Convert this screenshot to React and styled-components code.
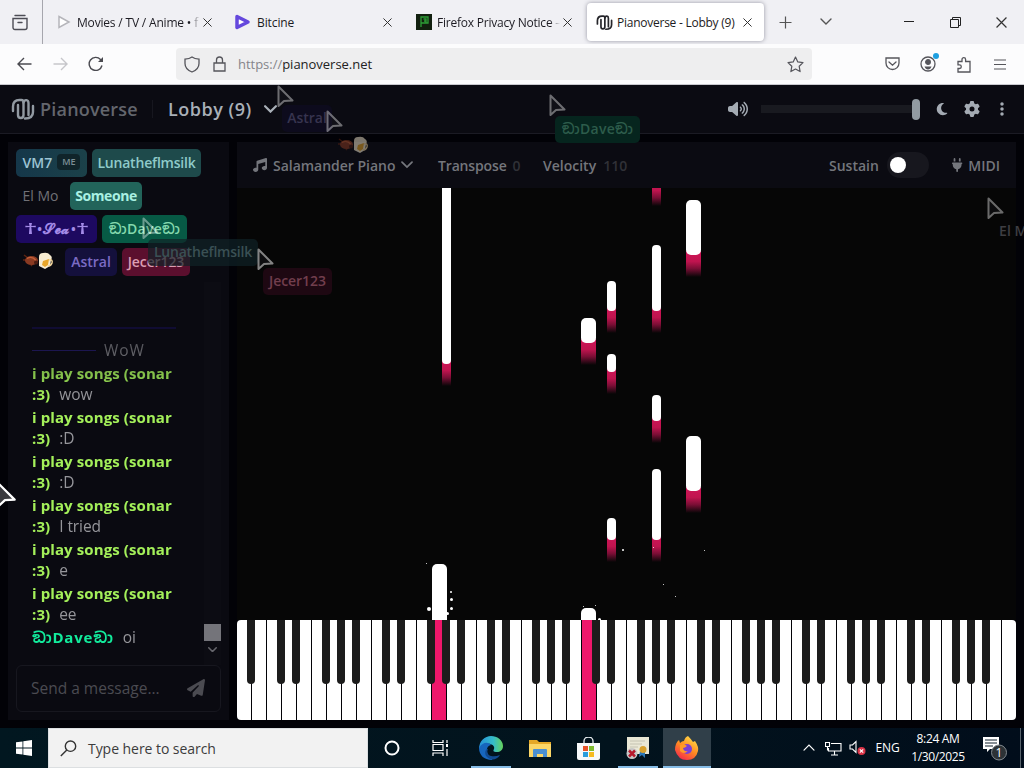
import styled, { createGlobalStyle } from "styled-components";
import {
  FaVolumeHigh,
  FaMoon,
  FaGear,
  FaEllipsisVertical,
  FaMusic,
  FaPlug,
  FaPaperPlane,
} from "react-icons/fa6";

const GlobalStyle = createGlobalStyle`
  * {
    box-sizing: border-box;
  }
  body {
    margin: 0;
    overflow: hidden;
    background: #020207;
  }
`;

const Screen = styled.div`
  position: relative;
  display: flex;
  flex-direction: column;
  width: 1024px;
  height: 768px;
  overflow: hidden;
  background: #020207;
  font-family: "Open Sans", "Noto Sans", "Noto Sans Sinhala", "DejaVu Sans", sans-serif;
  white-space: nowrap;
`;

/* ---------- browser ---------- */

const TabStrip = styled.div`
  display: flex;
  align-items: center;
  height: 44px;
  background: #f0f0f4;
`;

const ViewButton = styled.div`
  display: flex;
  align-items: center;
  justify-content: center;
  width: 43px;
  height: 44px;
  padding-right: 3px;
  border-right: 1px solid #a6a6ad;
`;

const Tab = styled.div`
  display: flex;
  align-items: center;
  width: ${(p) => p.$width}px;
  height: 38px;
  padding: 0 ${(p) => p.$right || 11}px 0 ${(p) => p.$left || 12}px;
  border-radius: 4px;
  background: ${(p) => (p.$active ? "#fff" : "transparent")};
  box-shadow: ${(p) => (p.$active ? "0 0 4px rgba(90, 90, 110, 0.6)" : "none")};
`;

const TabTitle = styled.div`
  flex: 1;
  overflow: hidden;
  margin: 0 3px 0 ${(p) => p.$gap || 5}px;
  font-size: 12px;
  letter-spacing: ${(p) => p.$spacing || 0}px;
  color: #1c1b22;
  mask-image: ${(p) =>
    p.$fade ? "linear-gradient(90deg, #000 92%, transparent)" : "none"};
`;

const StripButton = styled.div`
  display: flex;
  align-items: center;
  justify-content: center;
  width: ${(p) => p.$width}px;
`;

const Spacer = styled.div`
  flex: 1;
`;

const NavBar = styled.div`
  display: flex;
  align-items: center;
  height: 41px;
  padding-left: 6px;
  background: #fcfcfd;
  border-bottom: 1px solid #c9c9cf;
`;

const NavButton = styled.div`
  display: flex;
  align-items: center;
  justify-content: center;
  width: 36px;
  height: 32px;
  position: relative;
`;

const UrlBar = styled.div`
  display: flex;
  align-items: center;
  width: 636px;
  height: 32px;
  margin-left: 62px;
  padding: 0 8px;
  border-radius: 4px;
  background: #eeeeef;
`;

const UrlText = styled.div`
  flex: 1;
  margin-left: 10px;
  font-size: 13px;
  letter-spacing: -0.02px;
  color: #222;
  span {
    color: #85858a;
  }
`;

const Dot = styled.i`
  position: absolute;
  top: 5px;
  right: 7px;
  width: 6px;
  height: 6px;
  border-radius: 50%;
  background: #1e9fe0;
`;

/* ---------- site ---------- */

const SiteHeader = styled.div`
  display: flex;
  align-items: center;
  height: 49px;
  padding: 0 7px 0 11px;
  background: #0b0b12;
  border-bottom: 1px solid #1b1b24;
`;

const Brand = styled.div`
  display: flex;
  align-items: center;
  width: 142px;
  height: 18px;
  gap: 5px;
  border-right: 1px solid #17171f;
  color: #63666d;
  font-size: 18px;
  font-weight: 600;
  letter-spacing: 0.2px;
`;

const Room = styled.div`
  display: flex;
  align-items: center;
  gap: 12px;
  margin-left: 15px;
  font-size: 18px;
  font-weight: 600;
  letter-spacing: 0.5px;
  color: #a9b0b8;
`;

const HeaderIcon = styled.div`
  display: flex;
  align-items: center;
  justify-content: center;
  width: 30px;
  color: #a4abb3;
`;

const VolumeTrack = styled.div`
  display: flex;
  justify-content: flex-end;
  align-items: center;
  width: 159px;
  height: 8px;
  margin: 0 7px 0 12px;
  background: #191a20;
`;

const VolumeThumb = styled.div`
  width: 8px;
  height: 21px;
  border-radius: 4px;
  background: #929ba2;
`;

const SiteBody = styled.div`
  display: flex;
  gap: 8px;
  height: 594px;
  padding: 8px;
`;

const Sidebar = styled.div`
  display: flex;
  flex-direction: column;
  width: 221px;
  height: 578px;
  padding: 7px 8px 8px;
  background: #0a0a11;
`;

const Chips = styled.div`
  display: flex;
  flex-wrap: wrap;
  gap: 5px;
  padding-right: 8px;
`;

const Chip = styled.div`
  display: flex;
  align-items: center;
  justify-content: center;
  width: ${(p) => p.$width}px;
  height: 28px;
  padding-bottom: 2px;
  gap: 5px;
  border-radius: 5px;
  background: ${(p) => p.$bg || "transparent"};
  color: ${(p) => p.$color};
  font-size: 14px;
  font-weight: ${(p) => p.$weight || 600};
  letter-spacing: ${(p) => p.$spacing || 0}px;
`;

const MeBadge = styled.span`
  padding: 1px 5px;
  border-radius: 4px;
  background: #10242a;
  color: #7c8f96;
  font-size: 9px;
  line-height: 14px;
`;

const WideGlyph = styled.span`
  display: inline-block;
  margin: 0 2px;
  transform: scaleX(1.9);
`;

const ScriptName = styled.span`
  font-size: 14px;
  letter-spacing: 0.5px;
`;

const NameRow = styled.span`
  display: flex;
  align-items: center;
  gap: 1px;
`;

const ChatArea = styled.div`
  display: flex;
  flex: 1;
  min-height: 0;
  margin-top: 6px;
`;

const ChatLog = styled.div`
  display: flex;
  flex-direction: column;
  justify-content: flex-end;
  width: 188px;
  padding: 0 16px 17px;
  font-size: 15.5px;
  line-height: 21px;
  mask-image: linear-gradient(180deg, transparent 2%, #000 30%);
`;

const Message = styled.div`
  margin-top: 2px;
  color: #96969b;
  font-weight: 400;
  letter-spacing: -0.1px;
  white-space: normal;
`;

const Author = styled.b`
  margin-right: 9px;
  color: ${(p) => p.$color};
  font-size: 15px;
  font-weight: 700;
  letter-spacing: ${(p) => p.$spacing || 0}px;
`;

const Divider = styled.div`
  height: 2px;
  width: 144px;
  margin-bottom: 11px;
  background: #1d1270;
`;

const WelcomeLine = styled.div`
  display: flex;
  align-items: center;
  gap: 8px;
  color: #9c9ca1;
  letter-spacing: 0.9px;
  &::before {
    content: "";
    width: 64px;
    height: 1px;
    background: #2b1f80;
  }
`;

const Scrollbar = styled.div`
  display: flex;
  flex-direction: column;
  align-items: center;
  justify-content: flex-end;
  gap: 6px;
  width: 17px;
  padding-bottom: 13px;
  background: #0c0c13;
`;

const ScrollThumb = styled.div`
  width: 17px;
  height: 17px;
  background: #74747a;
`;

const MessageBox = styled.div`
  display: flex;
  align-items: center;
  justify-content: space-between;
  height: 47px;
  padding: 0 15px 1px 14px;
  border: 1px solid #17171f;
  border-radius: 6px;
  color: #4b4b51;
  font-size: 15.5px;
`;

const Main = styled.div`
  display: flex;
  flex-direction: column;
  width: 780px;
  height: 578px;
`;

const PianoBar = styled.div`
  display: flex;
  align-items: center;
  height: 46px;
  padding: 0 16px;
  background: #0b0b12;
  color: #74767c;
  font-size: 14px;
  font-weight: 600;
`;

const BarItem = styled.div`
  display: flex;
  align-items: center;
  width: ${(p) => p.$width}px;
  gap: ${(p) => p.$gap || 6}px;
  letter-spacing: ${(p) => p.$spacing || 0}px;
  em {
    font-style: normal;
    color: #303137;
  }
`;

const Toggle = styled.div`
  width: 42px;
  height: 26px;
  padding: 5px 3px;
  border-radius: 13px;
  background: #17171e;
  &::before {
    content: "";
    display: block;
    width: 16px;
    height: 16px;
    border-radius: 50%;
    background: #fff;
  }
`;

const NoteCanvas = styled.div`
  position: relative;
  height: 432px;
  overflow: hidden;
  background: #060606;
`;

const Note = styled.div`
  position: absolute;
  left: ${(p) => p.$x}px;
  top: ${(p) => p.$y}px;
  width: ${(p) => p.$w}px;
  height: ${(p) => p.$h}px;
  z-index: 1;
  border-radius: ${(p) => (p.$w > 10 ? 5 : 4)}px;
  background: #fff;
`;

const Trail = styled.div`
  position: absolute;
  left: ${(p) => p.$x}px;
  top: ${(p) => p.$y}px;
  width: ${(p) => p.$w}px;
  height: 26px;
  background: linear-gradient(180deg, #d01558, #c0144f 40%, #7a0e35 68%, rgba(60, 8, 25, 0));
`;

const Spark = styled.i`
  position: absolute;
  left: ${(p) => p.$x}px;
  top: ${(p) => p.$y}px;
  width: ${(p) => p.$s}px;
  height: ${(p) => p.$s}px;
  border-radius: 50%;
  background: #fff;
`;

const Keyboard = styled.div`
  display: flex;
  gap: 1px;
  height: 100px;
  border-radius: 4px;
`;

const WhiteKey = styled.div`
  position: relative;
  width: 14px;
  height: 100px;
  background: ${(p) => (p.$on ? "#ee176b" : "#fff")};
  &:first-child {
    border-radius: 4px 0 0 4px;
  }
  &:last-child {
    border-radius: 0 4px 4px 0;
  }
`;

const BlackKey = styled.div`
  position: absolute;
  z-index: 1;
  left: 10px;
  top: 0;
  width: 8px;
  height: 64px;
  border-radius: 0 0 4px 4px;
  background: #1c1c1c;
`;

/* ---------- remote cursors ---------- */

const Pointer = styled.div`
  position: absolute;
  z-index: 5;
  left: ${(p) => p.$x}px;
  top: ${(p) => p.$y}px;
  opacity: ${(p) => p.$opacity || 0.4};
  line-height: 0;
`;

const PointerLabel = styled.div`
  position: absolute;
  z-index: 4;
  left: ${(p) => p.$x}px;
  top: ${(p) => p.$y}px;
  width: ${(p) => p.$w}px;
  height: 27px;
  border-radius: 5px;
  background: ${(p) => p.$bg || "transparent"};
  color: ${(p) => p.$color};
  font-size: 14px;
  font-weight: 600;
  line-height: 26px;
  text-align: center;
  letter-spacing: ${(p) => p.$spacing || 0}px;
  opacity: ${(p) => p.$opacity || 1};
`;

/* ---------- taskbar ---------- */

const Taskbar = styled.div`
  display: flex;
  align-items: stretch;
  height: 40px;
  background: linear-gradient(90deg, #011720, #02131d 60%, #010d1b);
  color: #fff;
`;

const TaskCell = styled.div`
  display: flex;
  align-items: center;
  justify-content: center;
  width: ${(p) => p.$width || 49}px;
  background: ${(p) => (p.$active ? "#303f49" : "transparent")};
`;

const OpenCell = styled(TaskCell)`
  width: ${(p) => (p.$active ? 48 : 40)}px;
  margin: ${(p) => p.$margin || 0};
  border-bottom: 2px solid #86bce6;
  padding-top: 2px;
`;

const TaskSearch = styled.div`
  display: flex;
  align-items: center;
  gap: 11px;
  width: 320px;
  padding-left: 11px;
  border: 1px solid #dcdfe1;
  background: #f2f2f2;
  color: #3c3c3c;
  font-size: 14px;
  letter-spacing: -0.05px;
`;

const TrayText = styled.div`
  display: flex;
  flex-direction: column;
  justify-content: center;
  width: ${(p) => p.$width}px;
  padding-bottom: 1px;
  text-align: center;
  font-size: 12px;
  line-height: 18px;
  letter-spacing: ${(p) => p.$spacing || 0}px;
`;

const ShowDesktop = styled.div`
  width: 4px;
  border-left: 1px solid #58636c;
`;

const Close = ({ size = 9, color = "#333" }) => (
  <svg width={size} height={size} viewBox="0 0 10 10" stroke={color} strokeWidth="1.1">
    <path d="M.5 .5l9 9M9.5 .5l-9 9" />
  </svg>
);

const Chevron = ({ w = 12, color = "#555", stroke = 1.4, up }) => (
  <svg width={w} height={w * 0.6} viewBox="0 0 12 7" fill="none" stroke={color} strokeWidth={stroke} strokeLinecap="round">
    <path d={up ? "M1 6l5-5 5 5" : "M1 1l5 5 5-5"} />
  </svg>
);

const Logo = ({ size = 24, color = "#929aa2" }) => (
  <svg width={size} height={size} viewBox="0 0 24 24" fill="none" stroke={color} strokeWidth="2.4" strokeLinecap="round">
    <path d="M2 14V9.500C2 5.500 4.500 3 8.500 3h2c1.500 0 2 1 2 2.500V18c0 4-5.500 4-5.500 0V8" />
    <path d="M12.500 5.500c1-3.500 5-3 5 .5V18M14 21.500c5 0 8-2.500 8-6.500V9" />
  </svg>
);

const Arrow = ({ size = 22, fill = "rgba(40,40,45,.5)" }) => (
  <svg width={size} height={size} viewBox="0 0 22 22" fill={fill} stroke="#fff" strokeWidth="2" strokeLinejoin="round">
    <path d="M1.500 1.500l14 14-8.500 .5-5.500 5z" />
  </svg>
);

const Emojis = () => (
  <svg width="32" height="18" viewBox="0 0 32 18">
    <path d="M2 3l4 3M1 8l4 0M9 14l2-3" stroke="#5d2413" strokeWidth="1.5" />
    <ellipse cx="9.5" cy="8.5" rx="6.500" ry="4.500" fill="#8a3a22" />
    <path d="M5 6.500q5-3 9 2" stroke="#c4603b" strokeWidth="1.4" fill="none" />
    <circle cx="14" cy="10.500" r="2" fill="#4a1c12" />
    <path d="M17 5q0-4 4-4 5-1 7 2 3 2 1 5l-1 6-5 3-6-3z" fill="#f8ecd2" />
    <path d="M21 9l6-2-1 6-3 2-3-2z" fill="#e9a62a" />
    <path d="M27 8q4-1 3 3-1 3-4 3" fill="none" stroke="#f1d59c" strokeWidth="1.5" />
  </svg>
);

const BLACK_AFTER = [0, 2, 3, 5, 6];
const KEYS = Array.from({ length: 52 }, (_, i) => i);

const NOTES = [
  [205, -10, 9, 186],
  [415, -40, 9, 36],
  [449, 12, 15, 55],
  [415, 57, 9, 66],
  [370, 93, 9, 30],
  [344, 130, 15, 25],
  [370, 166, 9, 18],
  [415, 207, 9, 26],
  [449, 248, 15, 55],
  [415, 281, 9, 71],
  [370, 330, 9, 22],
  [195, 376, 15, 80],
  [344, 420, 15, 40],
];

const SPARKS = [
  [189, 375, 1], [190, 419, 4], [213, 403, 2], [213, 410, 3], [213, 419, 3],
  [209, 424, 3], [385, 361, 2], [416, 359, 1], [426, 396, 1], [438, 408, 1],
  [467, 362, 1], [346, 418, 1], [358, 417, 1], [361, 430, 3],
];

const CHAT = ["wow", ":D", ":D", "I tried", "e", "ee"];

const Browser = () => (
  <>
    <TabStrip>
      <ViewButton>
        <svg width="16" height="17" viewBox="0 0 16 17" fill="none" stroke="#4c4c55" strokeWidth="1.4">
          <path d="M3 1.500h10M1 4.500h14v9a2 2 0 0 1-2 2H3a2 2 0 0 1-2-2zM6 8.500h4" strokeLinecap="round" />
        </svg>
      </ViewButton>
      <Tab $width={180} $left={14}>
        <svg width="14" height="14" viewBox="0 0 14 14" fill="#fff" stroke="#b5b5ba" strokeWidth="1.5">
          <path d="M2 1.500l10 5.500-10 5.500z" />
        </svg>
        <TabTitle $gap={6} $spacing={-0.18} $fade>Movies / TV / Anime • f</TabTitle>
        <Close />
      </Tab>
      <Tab $width={180} $left={12}>
        <svg width="16" height="16" viewBox="0 0 16 16">
          <path d="M2 2.500l11 5.500-11 5.500z" fill="#fff" stroke="#6548dd" strokeWidth="3.5" strokeLinejoin="round" />
        </svg>
        <TabTitle $gap={6} $spacing={-0.1}>Bitcine</TabTitle>
        <Close />
      </Tab>
      <Tab $width={184} $left={13} $right={15}>
        <svg width="16" height="16" viewBox="0 0 16 16" fill="none" stroke="#2d9e36" strokeWidth="1.3">
          <rect width="16" height="16" fill="#12200f" stroke="none" />
          <path d="M5 13V3h7v6H5M7.500 5H10v2H8M10 7v2" />
        </svg>
        <TabTitle $spacing={-0.22} $fade>Firefox Privacy Notice –</TabTitle>
        <Close />
      </Tab>
      <Tab $width={177} $left={9} $right={12} $active>
        <Logo size={17} color="#26262b" />
        <TabTitle $gap={4} $spacing={-0.25}>Pianoverse - Lobby (9)</TabTitle>
        <Close />
      </Tab>
      <StripButton $width={42}>
        <svg width="13" height="13" stroke="#555" strokeWidth="1.2">
          <path d="M6.500 .5v12M.5 6.500h12" />
        </svg>
      </StripButton>
      <StripButton $width={40}>
        <Chevron w={12} />
      </StripButton>
      <Spacer />
      <StripButton $width={46}>
        <svg width="10" height="2">
          <rect width="10" height="1" fill="#222" />
        </svg>
      </StripButton>
      <StripButton $width={46}>
        <svg width="11" height="11" fill="none" stroke="#222">
          <path d="M.5 2.500h8v8h-8zM2.500 2.500v-2h8v8h-2" />
        </svg>
      </StripButton>
      <StripButton $width={46}>
        <Close size={11} />
      </StripButton>
    </TabStrip>
    <NavBar>
      <NavButton>
        <svg width="15" height="14" viewBox="0 0 15 14" fill="none" stroke="#4a4a50" strokeWidth="1.4">
          <path d="M14.500 7H1.500M7 1L1 7l6 6" />
        </svg>
      </NavButton>
      <NavButton>
        <svg width="15" height="14" viewBox="0 0 15 14" fill="none" stroke="#c6c6ca" strokeWidth="1.4">
          <path d="M.5 7h13M8 1l6 6-6 6" />
        </svg>
      </NavButton>
      <NavButton>
        <svg width="16" height="16" viewBox="0 0 16 16" fill="none" stroke="#4a4a50" strokeWidth="1.4">
          <path d="M14 9.500A6.500 6.500 0 1 1 12.500 3.500L14.500 5.500" />
          <path d="M15 1v5h-5z" fill="#4a4a50" stroke="none" />
        </svg>
      </NavButton>
      <UrlBar>
        <svg width="16" height="17" viewBox="0 0 16 17" fill="none" stroke="#55555b" strokeWidth="1.3">
          <path d="M8 1c2 1.500 4 2 7 2.200v4.300c0 4-3 7-7 8.500-4-1.500-7-4.500-7-8.500V3.200C4 3 6 2.500 8 1z" />
        </svg>
        <svg width="28" height="16" viewBox="-14 0 28 16" fill="none" stroke="#55555b" strokeWidth="1.3">
          <path d="M0 7h11v8H0zM2.500 7V4a3 3 0 0 1 6 0v3" />
        </svg>
        <UrlText><span>https://</span>pianoverse.net</UrlText>
        <svg width="17" height="17" viewBox="0 0 17 17" fill="none" stroke="#55555b" strokeWidth="1.2" strokeLinejoin="round">
          <path d="M8.500 1l2.300 4.900 5.200.7-3.800 3.700.9 5.300-4.600-2.600-4.600 2.600.9-5.300L1 6.600l5.200-.7z" />
        </svg>
      </UrlBar>
      <Spacer />
      <NavButton>
        <svg width="15" height="14" viewBox="0 0 15 14" fill="none" stroke="#55555b" strokeWidth="1.3" strokeLinecap="round">
          <path d="M1 1h13v5a6.500 6.500 0 0 1-13 0zM4 5l3.500 3.200L11 5" />
        </svg>
      </NavButton>
      <NavButton>
        <svg width="16" height="16" viewBox="0 0 16 16" fill="none" stroke="#55555b" strokeWidth="1.3">
          <circle cx="8" cy="8" r="7" />
          <circle cx="8" cy="6" r="2.3" fill="#55555b" />
          <path d="M4.500 10.500h7q-1 3-3.500 3t-3.500-3z" fill="#55555b" stroke="none" />
        </svg>
        <Dot />
      </NavButton>
      <NavButton>
        <svg width="16" height="17" viewBox="0 0 16 17" fill="none" stroke="#55555b" strokeWidth="1.3">
          <path d="M2 16V12.500h1.500a1.800 1.800 0 0 0 0-3.600H2V5.500h4V3.500a1.800 1.800 0 0 1 3.600 0v2H14V16z" />
        </svg>
      </NavButton>
      <NavButton>
        <svg width="12" height="11" stroke="#55555b" strokeWidth="1.2">
          <path d="M0 1h12M0 5.500h12M0 10h12" />
        </svg>
      </NavButton>
      <StripButton $width={6} />
    </NavBar>
  </>
);

const Piano = () => (
  <Main>
    <PianoBar>
      <BarItem $width={185} $spacing={-0.02}>
        <FaMusic size={14} />
        Salamander Piano
        <Chevron w={12} color="#75777d" stroke={1.8} />
      </BarItem>
      <BarItem $width={105} $gap={6} $spacing={-0.15}>
        Transpose <em>0</em>
      </BarItem>
      <BarItem $width={100} $gap={7}>
        Velocity <em>110</em>
      </BarItem>
      <Spacer />
      <BarItem $gap={8} $width={122}>
        Sustain
        <Toggle />
      </BarItem>
      <BarItem $width={49} $gap={5}>
        <FaPlug size={14} />
        MIDI
      </BarItem>
    </PianoBar>
    <NoteCanvas>
      {NOTES.map(([x, y, w, h]) => (
        <Trail key={"t" + x + y} $x={x} $y={y + h - 4} $w={w} />
      ))}
      {NOTES.map(([x, y, w, h]) => (
        <Note key={"n" + x + y} $x={x} $y={y} $w={w} $h={h} />
      ))}
      {SPARKS.map(([x, y, s]) => (
        <Spark key={"s" + x + y} $x={x} $y={y} $s={s} />
      ))}
    </NoteCanvas>
    <Keyboard>
      {KEYS.map((i) => (
        <WhiteKey key={i} $on={i === 13 || i === 23}>
          {BLACK_AFTER.includes(i % 7) && i < 51 && <BlackKey />}
        </WhiteKey>
      ))}
    </Keyboard>
  </Main>
);

const Chat = () => (
  <Sidebar>
    <Chips>
      <Chip $width={71} $bg="linear-gradient(90deg, #15374a, #1b4149)" $color="#9cc3d4">
        VM7 <MeBadge>ME</MeBadge>
      </Chip>
      <Chip $width={109} $bg="#1e4a4b" $color="#8fcac9" $spacing={-0.2}>Lunatheflmsilk</Chip>
      <Chip $width={49} $color="#717176" $weight={500}>El Mo</Chip>
      <Chip $width={72} $bg="#22645a" $color="#a9f0e2" $weight={700} $spacing={-0.4}>Someone</Chip>
      <Chip $width={81} $bg="#1d0960" $color="#a48be8">
        <NameRow>
          <WideGlyph>†</WideGlyph>•<ScriptName>𝓢𝓮𝓪</ScriptName>•<WideGlyph>†</WideGlyph>
        </NameRow>
      </Chip>
      <Chip $width={85} $bg="#075a45" $color="#84d8ad" $spacing={0.3}>ඞාDaveඞා</Chip>
      <Chip $width={44}><Emojis /></Chip>
      <Chip $width={52} $bg="#14103c" $color="#7b6bc4">Astral</Chip>
      <Chip $width={68} $bg="#5b0f2e" $color="#dc9db2" $spacing={-0.1}>Jecer123</Chip>
    </Chips>
    <ChatArea>
      <ChatLog>
        <Divider />
        <WelcomeLine>WoW</WelcomeLine>
        {CHAT.map((text, i) => (
          <Message key={i}>
            <Author $color="#a4f05a" $spacing={0.1}>i play songs (sonar :3)</Author>
            {text}
          </Message>
        ))}
        <Message>
          <Author $color="#12eb9c" $spacing={0.8}>ඞාDaveඞා</Author>
          oi
        </Message>
      </ChatLog>
      <Scrollbar>
        <ScrollThumb />
        <Chevron w={9} color="#66666c" stroke={2} />
      </Scrollbar>
    </ChatArea>
    <MessageBox>
      Send a message...
      <FaPaperPlane size={18} />
    </MessageBox>
  </Sidebar>
);

const Pointers = () => (
  <>
    <Pointer $x={277} $y={85}><Arrow /></Pointer>
    <Pointer $x={326} $y={110}><Arrow /></Pointer>
    <Pointer $x={549} $y={94}><Arrow /></Pointer>
    <Pointer $x={142} $y={217}><Arrow /></Pointer>
    <Pointer $x={257} $y={248} $opacity={0.5}><Arrow /></Pointer>
    <Pointer $x={987} $y={197}><Arrow /></Pointer>
    <Pointer $x={-3} $y={482} $opacity={1}><Arrow size={25} fill="#3a3a3e" /></Pointer>
    <PointerLabel $x={282} $y={105} $w={50} $bg="#0d0b1d" $color="#37344f">Astral</PointerLabel>
    <PointerLabel $x={337} $y={136} $w={32} $opacity={0.5}><Emojis /></PointerLabel>
    <PointerLabel $x={555} $y={116} $w={85} $bg="#06251e" $color="#2d5c4b" $spacing={0.3}>ඞාDaveඞා</PointerLabel>
    <PointerLabel $x={148} $y={239} $w={110} $bg="rgba(15, 34, 39, 0.7)" $color="#3a5054" $spacing={-0.2}>Lunatheflmsilk</PointerLabel>
    <PointerLabel $x={263} $y={268} $w={69} $bg="#1e0812" $color="#713e4d" $spacing={-0.05}>Jecer123</PointerLabel>
    <PointerLabel $x={993} $y={218} $w={49} $color="#3e3e42">El Mo</PointerLabel>
  </>
);

const WindowsTaskbar = () => (
  <Taskbar>
    <TaskCell $width={48}>
      <svg width="16" height="16" viewBox="0 0 16 16" fill="#fff">
        <path d="M0 2.300l6.500-.9v6.200H0zM7.300 1.300L16 0v7.600H7.300zM0 8.400h6.500v6.200L0 13.700zM7.300 8.400H16V16l-8.700-1.300z" />
      </svg>
    </TaskCell>
    <TaskSearch>
      <svg width="17" height="17" viewBox="0 0 17 17" fill="none" stroke="#333" strokeWidth="1.4">
        <circle cx="10.5" cy="6.2" r="5.2" />
        <path d="M6.800 10L.8 16" />
      </svg>
      Type here to search
    </TaskSearch>
    <TaskCell $width={48}>
      <svg width="16" height="16" fill="none" stroke="#fff" strokeWidth="2">
        <circle cx="8" cy="8" r="6.5" />
      </svg>
    </TaskCell>
    <TaskCell $width={48}>
      <svg width="17" height="16" viewBox="0 0 17 16" fill="none" stroke="#fff" strokeWidth="1.2">
        <path d="M1 0v2.500h10V0M1 4.500h10v6H1zM1 16v-3h10v3M15 0v3M15 9v7" />
        <rect x="14" y="4" width="2" height="3" fill="#fff" stroke="none" />
      </svg>
    </TaskCell>
    <OpenCell $margin="0 0 0 7px">
      <svg width="24" height="24" viewBox="0 0 24 24">
        <defs>
          <linearGradient id="edgeTop" x1="0" x2="1">
            <stop offset="0" stopColor="#2590d8" />
            <stop offset=".6" stopColor="#35bcc9" />
            <stop offset="1" stopColor="#66d25a" />
          </linearGradient>
        </defs>
        <path d="M0 13C0 5 6 0 12 0s12 4 12 10c0 4-3 6-6 6-4 0-4-1-3-3 2-5-9-9-15 0z" fill="url(#edgeTop)" />
        <path d="M0 12c4-7 10-6 12-3-6 1-5 10 0 13 1 1 2 1.500 1 2C5 24 0 19 0 12z" fill="#1766bd" />
        <path d="M9 13c-3 7 5 9 12 6-3 5-9 6-13 2-3-3-2-8 1-8z" fill="#114a91" />
      </svg>
    </OpenCell>
    <TaskCell $width={57}>
      <svg width="22" height="19" viewBox="0 0 22 19">
        <path d="M0 1h8l2 2h12v15H0z" fill="#e5a827" />
        <path d="M0 5h22v13H0z" fill="#fbd667" />
        <path d="M4 18v-7q0-1 1-1h12q1 0 1 1v7h-4v-3H8v3z" fill="#4b8fd1" />
      </svg>
    </TaskCell>
    <TaskCell $width={41}>
      <svg width="23" height="23" viewBox="0 0 23 23">
        <path d="M7 6V4a4.500 4 0 0 1 9 0v2" fill="none" stroke="#e8eef1" strokeWidth="1.3" />
        <path d="M0 6h23v15q0 2-2 2H2q-2 0-2-2z" fill="#f7f9fa" />
        <path d="M6 9h5v5H6z" fill="#e6532a" />
        <path d="M12 9h5v5h-5z" fill="#7dba2e" />
        <path d="M6 15h5v5H6z" fill="#2b9ddc" />
        <path d="M12 15h5v5h-5z" fill="#f6bb20" />
      </svg>
    </TaskCell>
    <OpenCell $margin="0 5px 0 9px">
      <svg width="24" height="24" viewBox="0 0 24 24">
        <path d="M1 1h22v17H1z" fill="#e9e7d5" />
        <path d="M4 5h15M4 8h12M4 11h8" stroke="#c5c3b2" />
        <path d="M14 15l-1 6 3-2 3 3v-6z" fill="#2c77b8" />
        <circle cx="17" cy="13.5" r="3.5" fill="#d8a12e" />
        <circle cx="6" cy="17.5" r="5.5" fill="#c7c7c7" />
        <path d="M3 14.500l6 6M9 14.500l-6 6" stroke="#b6182b" strokeWidth="2.5" />
      </svg>
    </OpenCell>
    <OpenCell $active>
      <svg width="24" height="24" viewBox="0 0 24 24">
        <defs>
          <linearGradient id="fox" x1=".8" y1="0" x2=".2" y2="1">
            <stop offset="0" stopColor="#ffe14a" />
            <stop offset=".5" stopColor="#ff8a22" />
            <stop offset="1" stopColor="#f5224f" />
          </linearGradient>
        </defs>
        <path d="M13 0q3 3 5 6l2-1q4 6 3 10-2 9-11 9T0 14Q0 7 4 4l1 3q2-2 4-2 1-4 4-5z" fill="url(#fox)" />
        <circle cx="12" cy="13" r="5" fill="#7a3fd6" />
        <path d="M5 9q4-2 7 1-2 2-4 2 1 4 5 3-4 4-8 0z" fill="#ff9b28" />
      </svg>
    </OpenCell>
    <Spacer />
    <TaskCell $width={26}><Chevron w={12} color="#fff" stroke={1.2} up /></TaskCell>
    <TaskCell $width={23}>
      <svg width="17" height="15" viewBox="0 0 17 15" fill="none" stroke="#fff" strokeWidth="1.1">
        <path d="M6 2.500h10v7.500H3.500V7M9.500 10v4M6 14h7M.5 1.500h4v4h-4zM2.500 5.500v4" />
      </svg>
    </TaskCell>
    <TaskCell $width={24}>
      <svg width="17" height="16" viewBox="0 0 17 16" fill="none" stroke="#fff" strokeWidth="1.1">
        <path d="M1 5h2.500l3.500-3.500v11L3.500 9H1z" />
        <circle cx="12.5" cy="11" r="4" fill="#da3347" stroke="none" />
        <path d="M10.800 9.300l3.400 3.400M14.200 9.300l-3.400 3.400" />
      </svg>
    </TaskCell>
    <TrayText $width={37} $spacing={-0.2}>ENG</TrayText>
    <TrayText $width={64} $spacing={-0.35}>
      <span>8:24 AM</span>
      <span>1/30/2025</span>
    </TrayText>
    <TaskCell $width={50}>
      <svg width="26" height="26" viewBox="0 0 26 26">
        <path d="M1 2h16v12H8l-3 3v-3H1z" fill="#fff" />
        <path d="M3 5h12M3 8h12M3 11h8" stroke="#10202c" />
        <circle cx="17" cy="17.5" r="7.5" fill="#2c3236" stroke="#828a90" />
        <text x="17" y="22" textAnchor="middle" fontSize="12" fill="#fff">1</text>
      </svg>
    </TaskCell>
    <ShowDesktop />
  </Taskbar>
);

const App = () => (
  <Screen>
    <GlobalStyle />
    <Browser />
    <SiteHeader>
      <Brand>
        <Logo />
        Pianoverse
      </Brand>
      <Room>
        Lobby (9)
        <Chevron w={13} color="#a9b0b8" stroke={2} />
      </Room>
      <Spacer />
      <StripButton $width={22}>
        <FaVolumeHigh size={20} color="#a4abb3" />
      </StripButton>
      <VolumeTrack>
        <VolumeThumb />
      </VolumeTrack>
      <HeaderIcon><FaMoon size={14} /></HeaderIcon>
      <HeaderIcon><FaGear size={16} /></HeaderIcon>
      <HeaderIcon><FaEllipsisVertical size={16} /></HeaderIcon>
    </SiteHeader>
    <SiteBody>
      <Chat />
      <Piano />
    </SiteBody>
    <WindowsTaskbar />
    <Pointers />
  </Screen>
);

export default App;
